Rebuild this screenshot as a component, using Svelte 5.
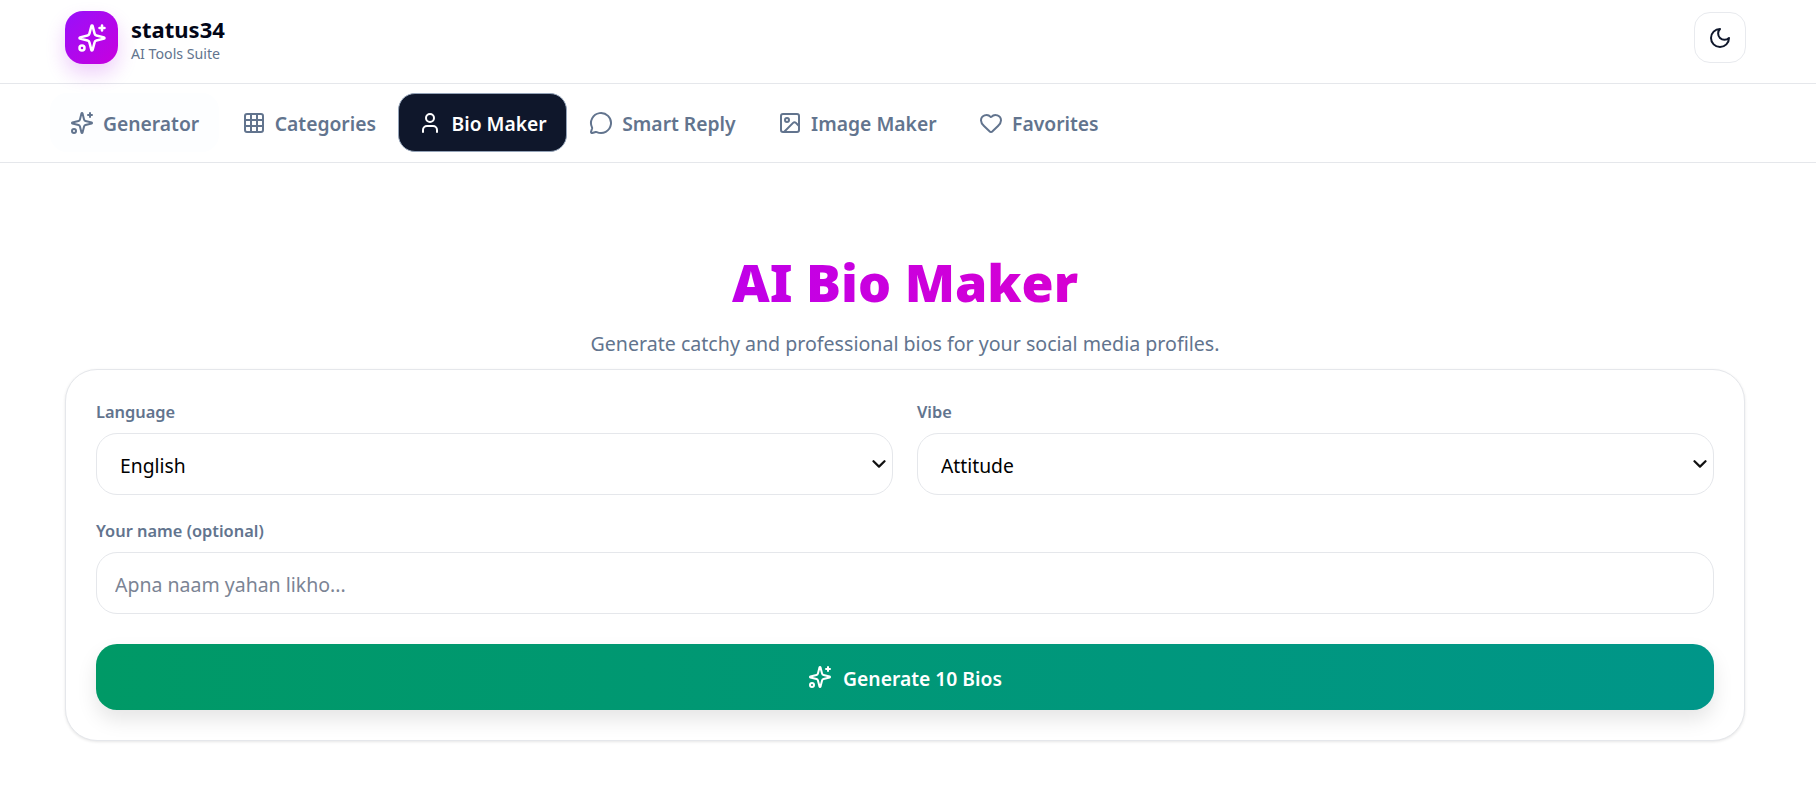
<script>
  const tabs = [
    { label: "Generator", icon: "sparkles" },
    { label: "Categories", icon: "grid" },
    { label: "Bio Maker", icon: "user", active: true },
    { label: "Smart Reply", icon: "message" },
    { label: "Image Maker", icon: "image" },
    { label: "Favorites", icon: "heart" }
  ];
</script>

{#snippet sparkles(size)}
  <svg class="icon" width={size} height={size} viewBox="0 0 24 24">
    <path d="M9.937 15.5A2 2 0 0 0 8.5 14.063l-6.135-1.582a.5.5 0 0 1 0-.962L8.5 9.936A2 2 0 0 0 9.937 8.5l1.582-6.135a.5.5 0 0 1 .963 0L14.063 8.5A2 2 0 0 0 15.5 9.937l6.135 1.581a.5.5 0 0 1 0 .964L15.5 14.063a2 2 0 0 0-1.437 1.437l-1.582 6.135a.5.5 0 0 1-.963 0z" />
    <path d="M20 2v4" />
    <path d="M22 4h-4" />
    <circle cx="4" cy="20" r="2" />
  </svg>
{/snippet}

{#snippet tabIcon(name)}
  {#if name === "sparkles"}
    {@render sparkles(24)}
  {:else}
    <svg class="icon" width="24" height="24" viewBox="0 0 24 24">
      {#if name === "grid"}
        <rect width="18" height="18" x="3" y="3" rx="2" />
        <path d="M3 9h18" />
        <path d="M3 15h18" />
        <path d="M9 3v18" />
        <path d="M15 3v18" />
      {:else if name === "user"}
        <path d="M19 21v-2a4 4 0 0 0-4-4H9a4 4 0 0 0-4 4v2" />
        <circle cx="12" cy="7" r="4" />
      {:else if name === "message"}
        <path d="M2.992 16.342a2 2 0 0 1 .094 1.167l-1.065 3.29a1 1 0 0 0 1.236 1.168l3.413-.998a2 2 0 0 1 1.099.092 10 10 0 1 0-4.777-4.719" />
      {:else if name === "image"}
        <rect width="18" height="18" x="3" y="3" rx="2" />
        <circle cx="9" cy="9" r="2" />
        <path d="m21 15-3.086-3.086a2 2 0 0 0-2.828 0L6 21" />
      {:else if name === "heart"}
        <path d="M2 9.5a5.5 5.5 0 0 1 9.591-3.676.56.56 0 0 0 .818 0A5.49 5.49 0 0 1 22 9.5c0 2.29-1.5 4-3 5.5l-5.492 5.313a2 2 0 0 1-3 .019L5 15c-1.5-1.5-3-3.2-3-5.5" />
      {/if}
    </svg>
  {/if}
{/snippet}

{#snippet chevron()}
  <svg class="chevron" width="14" height="8" viewBox="0 0 14 8">
    <path d="M1.500 1.200 7 6.600l5.500-5.400" />
  </svg>
{/snippet}

<div class="page">
  <header class="topbar">
    <div class="brand">
      <div class="logo">{@render sparkles(30)}</div>
      <div class="brand-text">
        <div class="brand-name">status34</div>
        <div class="brand-sub">AI Tools Suite</div>
      </div>
    </div>
    <button class="theme-btn" aria-label="Toggle theme">
      <svg class="icon" width="24" height="24" viewBox="0 0 24 24">
        <path d="M12 3a6 6 0 0 0 9 9 9 9 0 1 1-9-9Z" />
      </svg>
    </button>
  </header>

  <nav class="tabs">
    {#each tabs as tab}
      <button class="tab" class:active={tab.active} class:first={tab.label === "Generator"}>
        {@render tabIcon(tab.icon)}
        <span>{tab.label}</span>
      </button>
    {/each}
  </nav>

  <main class="content">
    <h1 class="title"><span>AI Bio Maker</span></h1>
    <p class="subtitle">Generate catchy and professional bios for your social media profiles.</p>

    <section class="card">
      <div class="row">
        <label class="field">
          <span class="field-label">Language</span>
          <span class="select-wrap">
            <select>
              <option>English</option>
              <option>Hindi</option>
            </select>
            {@render chevron()}
          </span>
        </label>
        <label class="field">
          <span class="field-label">Vibe</span>
          <span class="select-wrap">
            <select>
              <option>Attitude</option>
              <option>Professional</option>
            </select>
            {@render chevron()}
          </span>
        </label>
      </div>
      <label class="field">
        <span class="field-label">Your name (optional)</span>
        <input type="text" placeholder="Apna naam yahan likho..." />
      </label>
      <button class="generate">
        {@render sparkles(24)}
        <span>Generate 10 Bios</span>
      </button>
    </section>
  </main>
</div>

<style>
  :global(body) {
    margin: 0;
    background: #fff;
    font-family: "Noto Sans", "Open Sans", sans-serif;
    color: #0f172b;
  }

  .page {
    width: 1809px;
    min-height: 796px;
  }

  .icon {
    fill: none;
    stroke: currentColor;
    stroke-width: 2;
    stroke-linecap: round;
    stroke-linejoin: round;
    flex-shrink: 0;
  }

  .topbar {
    width: 1816px;
    box-sizing: border-box;
    height: 84px;
    padding: 0 70px 0 65px;
    display: flex;
    align-items: center;
    justify-content: space-between;
    border-bottom: 1px solid #e5e7eb;
  }

  .brand {
    display: flex;
    align-items: center;
    gap: 13px;
    margin-top: -8px;
  }

  .logo {
    width: 53px;
    height: 53px;
    border-radius: 18px;
    background: linear-gradient(135deg, #9810fa, #c800de);
    box-shadow: 0 10px 20px rgba(168, 20, 230, 0.2);
    color: #fff;
    display: flex;
    align-items: center;
    justify-content: center;
  }

  .brand-text {
    padding-top: 2px;
  }

  .brand-name {
    font-size: 22px;
    font-weight: 700;
    line-height: 28px;
    margin-bottom: 1px;
    color: #020617;
  }

  .brand-sub {
    font-size: 14.2px;
    line-height: 19px;
    color: #62748e;
  }

  .theme-btn {
    width: 52px;
    height: 51px;
    margin-top: -8px;
    border: 1px solid #e8eaee;
    border-radius: 16px;
    background: #fff;
    color: #0f172b;
    display: flex;
    align-items: center;
    justify-content: center;
    padding: 0;
  }

  .tabs {
    width: 1816px;
    box-sizing: border-box;
    height: 79px;
    padding: 9px 50px 0;
    display: flex;
    align-items: flex-start;
    gap: 2.500px;
    border-bottom: 1px solid #e5e7eb;
  }

  .tab {
    height: 59px;
    padding: 0 19px;
    display: flex;
    align-items: center;
    gap: 9px;
    border: 1px solid transparent;
    border-radius: 17px;
    background: transparent;
    color: #62748e;
    font: 600 19.3px "Noto Sans", sans-serif;
  }

  .tab span {
    padding-top: 2px;
  }

  .tab.first {
    background: #fdfeff;
  }

  .tab.active {
    background: #0f172b;
    color: #fff;
    border-color: #94a3b8;
  }

  .content {
    padding: 0 64px 0 65px;
    text-align: center;
  }

  .title {
    margin: 83px 0 0;
    font-size: 52px;
    line-height: 72px;
    font-weight: 900;
  }

  .title span {
    background: linear-gradient(90deg, #c000e8, #d600d2);
    -webkit-background-clip: text;
    background-clip: text;
    color: transparent;
  }

  .subtitle {
    margin: 12px 0 0;
    font-size: 19.6px;
    line-height: 28px;
    color: #62748e;
  }

  .card {
    margin-top: 11px;
    box-sizing: border-box;
    height: 372px;
    padding: 31px 30px;
    border: 1px solid #e5e7eb;
    border-radius: 32px;
    background: #fff;
    box-shadow: 0 1px 3px rgba(0, 0, 0, 0.1);
    text-align: left;
    display: flex;
    flex-direction: column;
  }

  .row {
    display: grid;
    grid-template-columns: 1fr 1fr;
    gap: 24px;
    margin-bottom: 25px;
  }

  .field {
    display: flex;
    flex-direction: column;
    gap: 10px;
  }

  .field-label {
    font-size: 16.4px;
    line-height: 22px;
    font-weight: 600;
    color: #62748e;
  }

  .select-wrap {
    position: relative;
    display: block;
  }

  .chevron {
    position: absolute;
    top: 27px;
    right: 7px;
    fill: none;
    stroke: #111;
    stroke-width: 2.2;
    stroke-linecap: round;
    stroke-linejoin: round;
    pointer-events: none;
  }

  select,
  input {
    box-sizing: border-box;
    width: 100%;
    height: 62px;
    border: 1px solid #e5e7eb;
    border-radius: 21px;
    background: #fff;
    font: 400 19.3px "Noto Sans", sans-serif;
    color: #000;
    outline: none;
  }

  select {
    display: block;
    padding: 2px 23px 0;
    appearance: none;
  }

  input {
    padding: 2px 18px 0;
    font-size: 19.5px;
  }

  input::placeholder {
    color: #7b8494;
    opacity: 1;
  }

  .generate {
    margin-top: 30px;
    height: 66px;
    flex-shrink: 0;
    border: none;
    border-radius: 21px;
    background: linear-gradient(90deg, #009966, #009689);
    box-shadow: 0 10px 20px rgba(0, 0, 0, 0.1);
    color: #fff;
    display: flex;
    align-items: center;
    justify-content: center;
    gap: 11px;
    font: 600 19.3px "Noto Sans", sans-serif;
  }

  .generate span {
    padding-top: 2px;
  }
</style>
